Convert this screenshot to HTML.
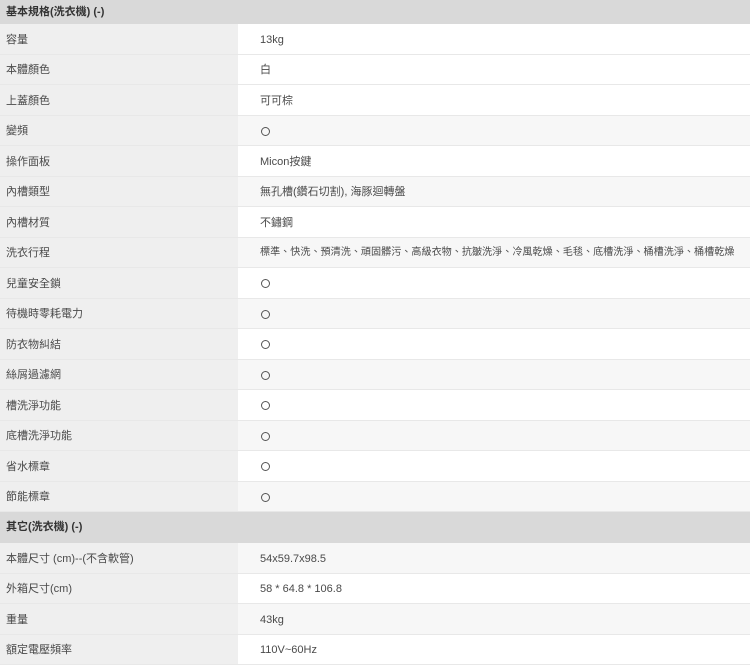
<!DOCTYPE html>
<html><head><meta charset="utf-8"><style>
*{margin:0;padding:0;box-sizing:border-box}
body{width:750px;height:667px;background:#fff;font-family:"Liberation Sans","Noto Sans CJK TC",sans-serif;font-size:11px;color:#4a4a4a;overflow:hidden}
.h{height:24px;background:#d9d9d9;font-weight:bold;color:#333;padding-left:6px;line-height:24px}
.h2{height:31px;line-height:31px}
.r{display:flex;height:30.5px;border-bottom:1px solid #e8e8e8}
.l{width:238px;background:#efefef;padding-left:6px;display:flex;align-items:center;line-height:14px;padding-top:2px}
.v{flex:1;padding-left:22px;display:flex;align-items:center;background:#fff;white-space:nowrap;line-height:14px;padding-top:2px}
.g .v{background:#f7f7f7}
.o{display:inline-block;width:9px;height:9px;border:1px solid #555;border-radius:50%;margin-left:1px}
</style></head><body>
<div class="h">基本規格(洗衣機) (-)</div>
<div class="r"><div class="l">容量</div><div class="v">13kg</div></div>
<div class="r"><div class="l">本體顏色</div><div class="v">白</div></div>
<div class="r"><div class="l">上蓋顏色</div><div class="v">可可棕</div></div>
<div class="r g"><div class="l">變頻</div><div class="v"><span class="o"></span></div></div>
<div class="r"><div class="l">操作面板</div><div class="v">Micon按鍵</div></div>
<div class="r g"><div class="l">內槽類型</div><div class="v">無孔槽(鑽石切割), 海豚迴轉盤</div></div>
<div class="r"><div class="l">內槽材質</div><div class="v">不鏽鋼</div></div>
<div class="r g"><div class="l">洗衣行程</div><div class="v" style="font-size:10.1px">標準、快洗、預清洗、頑固髒污、高級衣物、抗皺洗淨、冷風乾燥、毛毯、底槽洗淨、桶槽洗淨、桶槽乾燥</div></div>
<div class="r"><div class="l">兒童安全鎖</div><div class="v"><span class="o"></span></div></div>
<div class="r g"><div class="l">待機時零耗電力</div><div class="v"><span class="o"></span></div></div>
<div class="r"><div class="l">防衣物糾結</div><div class="v"><span class="o"></span></div></div>
<div class="r g"><div class="l">絲屑過濾網</div><div class="v"><span class="o"></span></div></div>
<div class="r"><div class="l">槽洗淨功能</div><div class="v"><span class="o"></span></div></div>
<div class="r g"><div class="l">底槽洗淨功能</div><div class="v"><span class="o"></span></div></div>
<div class="r"><div class="l">省水標章</div><div class="v"><span class="o"></span></div></div>
<div class="r g"><div class="l">節能標章</div><div class="v"><span class="o"></span></div></div>
<div class="h h2">其它(洗衣機) (-)</div>
<div class="r g"><div class="l">本體尺寸 (cm)--(不含軟管)</div><div class="v">54x59.7x98.5</div></div>
<div class="r"><div class="l">外箱尺寸(cm)</div><div class="v">58 * 64.8 * 106.8</div></div>
<div class="r g"><div class="l">重量</div><div class="v">43kg</div></div>
<div class="r"><div class="l">額定電壓頻率</div><div class="v">110V~60Hz</div></div>
</body></html>
